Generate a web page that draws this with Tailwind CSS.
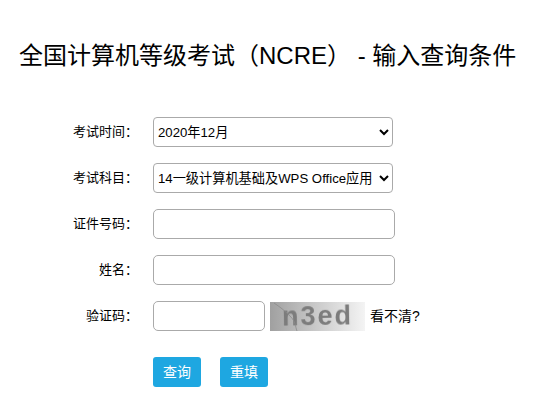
<!DOCTYPE html>
<html lang="zh">
<head>
<meta charset="utf-8">
<script src="https://cdn.jsdelivr.net/npm/@tailwindcss/browser@4"></script>
</head>
<body class="bg-white text-black font-['Liberation_Sans','Noto_Sans_CJK_SC',sans-serif] overflow-hidden">
<main class="w-[538px] h-[406px] overflow-hidden">
  <h1 class="pl-[19px] pt-[38px] text-[24px] leading-[36px] font-normal whitespace-nowrap">全国计算机等级考试（NCRE） - 输入查询条件</h1>
  <form class="mt-[43px] flex flex-col gap-4 text-[13px]">
    <div class="flex items-center h-[30px]">
      <label class="w-[138px] text-right">考试时间：</label>
      <select class="ml-[15px] w-[240px] h-[30px] border border-[#aaa] rounded-[4px] bg-white text-[13.2px]">
        <option>2020年12月</option>
      </select>
    </div>
    <div class="flex items-center h-[30px]">
      <label class="w-[138px] text-right">考试科目：</label>
      <select class="ml-[15px] w-[240px] h-[30px] border border-[#aaa] rounded-[4px] bg-white text-[13.2px]">
        <option>14一级计算机基础及WPS Office应用</option>
      </select>
    </div>
    <div class="flex items-center h-[30px]">
      <label class="w-[138px] text-right">证件号码：</label>
      <input class="ml-[15px] w-[242px] h-[30px] border border-[#aaa] rounded-[5px]">
    </div>
    <div class="flex items-center h-[30px]">
      <label class="w-[138px] text-right">姓名：</label>
      <input class="ml-[15px] w-[242px] h-[30px] border border-[#aaa] rounded-[5px]">
    </div>
    <div class="flex items-center h-[30px]">
      <label class="w-[138px] text-right">验证码：</label>
      <input class="ml-[15px] w-[112px] h-[30px] border border-[#aaa] rounded-[5px]">
      <div class="relative ml-[5px] w-[95px] h-[29px] flex items-center justify-center bg-gradient-to-r from-[#a0a0a0] via-[#cbcbcb] to-[#f4f4f4]">
        <span class="text-[27px] leading-[27px] font-bold text-[#7c7c7c] blur-[0.7px] tracking-[2px] -rotate-1">n3ed</span>
        <svg class="absolute inset-0" width="95" height="29" viewBox="0 0 95 29" fill="none"><path d="M4 1 C10 5 14 8 20 14 S25 24 27 29" stroke="#8a8a8a" stroke-width="0.8"/></svg>
      </div>
      <span class="ml-[5px] text-[14px]">看不清?</span>
    </div>
    <div class="flex gap-[19px] pl-[153px] mt-2.5">
      <button type="button" class="w-[48px] h-[30px] bg-[#1ea7e1] text-white rounded-[3px] text-[14px]">查询</button>
      <button type="button" class="w-[48px] h-[30px] bg-[#1ea7e1] text-white rounded-[3px] text-[14px]">重填</button>
    </div>
  </form>
</main>
</body>
</html>
